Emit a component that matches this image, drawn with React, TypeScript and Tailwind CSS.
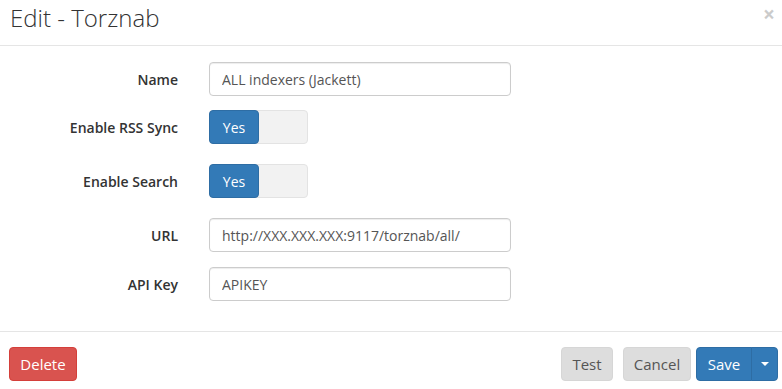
import React from "react";

const font = { fontFamily: '"Open Sans", "Liberation Sans", sans-serif' };

const Toggle = () => (
  <div className="flex h-[34px] w-[99px] rounded-[4px] border border-[#e3e3e3] bg-[#f2f2f2]">
    <div className="flex w-[50px] items-center justify-center rounded-[4px] border border-[#2e6da4] bg-[#337ab7] text-[14px] text-white -m-px h-[34px]">
      Yes
    </div>
  </div>
);

const Field = ({ value }: { value: string }) => (
  <input
    readOnly
    value={value}
    className="h-[34px] w-[302px] rounded-[4px] border border-[#cccccc] bg-white px-[12px] text-[14px] text-[#555555] outline-none shadow-[inset_0_1px_1px_rgba(0,0,0,0.075)]"
    style={font}
  />
);

const Row = ({ label, children, mb }: { label: string; children: React.ReactNode; mb: string }) => (
  <div className={`flex items-center ${mb}`}>
    <label className="w-[179px] pr-px text-right text-[14px] font-semibold text-[#333333]">{label}</label>
    <div className="ml-[30px]">{children}</div>
  </div>
);

export default function App() {
  return (
    <div className="h-[389px] w-[782px] overflow-hidden bg-white text-[#333333]" style={font}>
      {/* Header */}
      <div className="relative flex h-[46px] items-start border-b border-[#e5e5e5] px-[10px] pt-[1px]">
        <h3 className="text-[24px] font-light leading-[34px] text-[#333333]">Edit - Torznab</h3>
        <button className="absolute right-[7px] top-[3px] text-[21px] font-bold leading-[22px] text-black opacity-20">
          ×
        </button>
      </div>

      {/* Body */}
      <div className="pt-[16px] pb-[30px]">
        <Row label="Name" mb="mb-[14px]">
          <Field value="ALL indexers (Jackett)" />
        </Row>
        <Row label="Enable RSS Sync" mb="mb-[20px]">
          <Toggle />
        </Row>
        <Row label="Enable Search" mb="mb-[20px]">
          <Toggle />
        </Row>
        <Row label="URL" mb="mb-[15px]">
          <Field value="http://XXX.XXX.XXX:9117/torznab/all/" />
        </Row>
        <Row label="API Key" mb="mb-0">
          <Field value="APIKEY" />
        </Row>
      </div>

      {/* Footer */}
      <div className="flex items-center border-t border-[#e5e5e5] pl-[9px] pr-[4px] pt-[15px]">
        <button className="h-[34px] w-[68px] rounded-[4px] border border-[#d43f3a] bg-[#d9534f] text-[15px] text-white">
          Delete
        </button>
        <div className="ml-auto flex items-center">
          <button className="h-[34px] w-[52px] rounded-[4px] border border-[#d6d6d6] bg-[#dddddd] text-[15px] text-[#555555]">
            Test
          </button>
          <button className="ml-[10px] h-[34px] w-[68px] rounded-[4px] border border-[#d6d6d6] bg-[#dddddd] text-[15px] text-[#555555]">
            Cancel
          </button>
          <div className="ml-[5px] flex h-[34px]">
            <button className="w-[56px] rounded-l-[4px] border border-[#2e6da4] bg-[#337ab7] text-[15px] text-white">
              Save
            </button>
            <button className="-ml-px flex w-[27px] items-center justify-center rounded-r-[4px] border border-[#2e6da4] bg-[#337ab7]">
              <span className="h-0 w-0 border-x-[4px] border-t-[4px] border-x-transparent border-t-white" />
            </button>
          </div>
        </div>
      </div>
    </div>
  );
}
